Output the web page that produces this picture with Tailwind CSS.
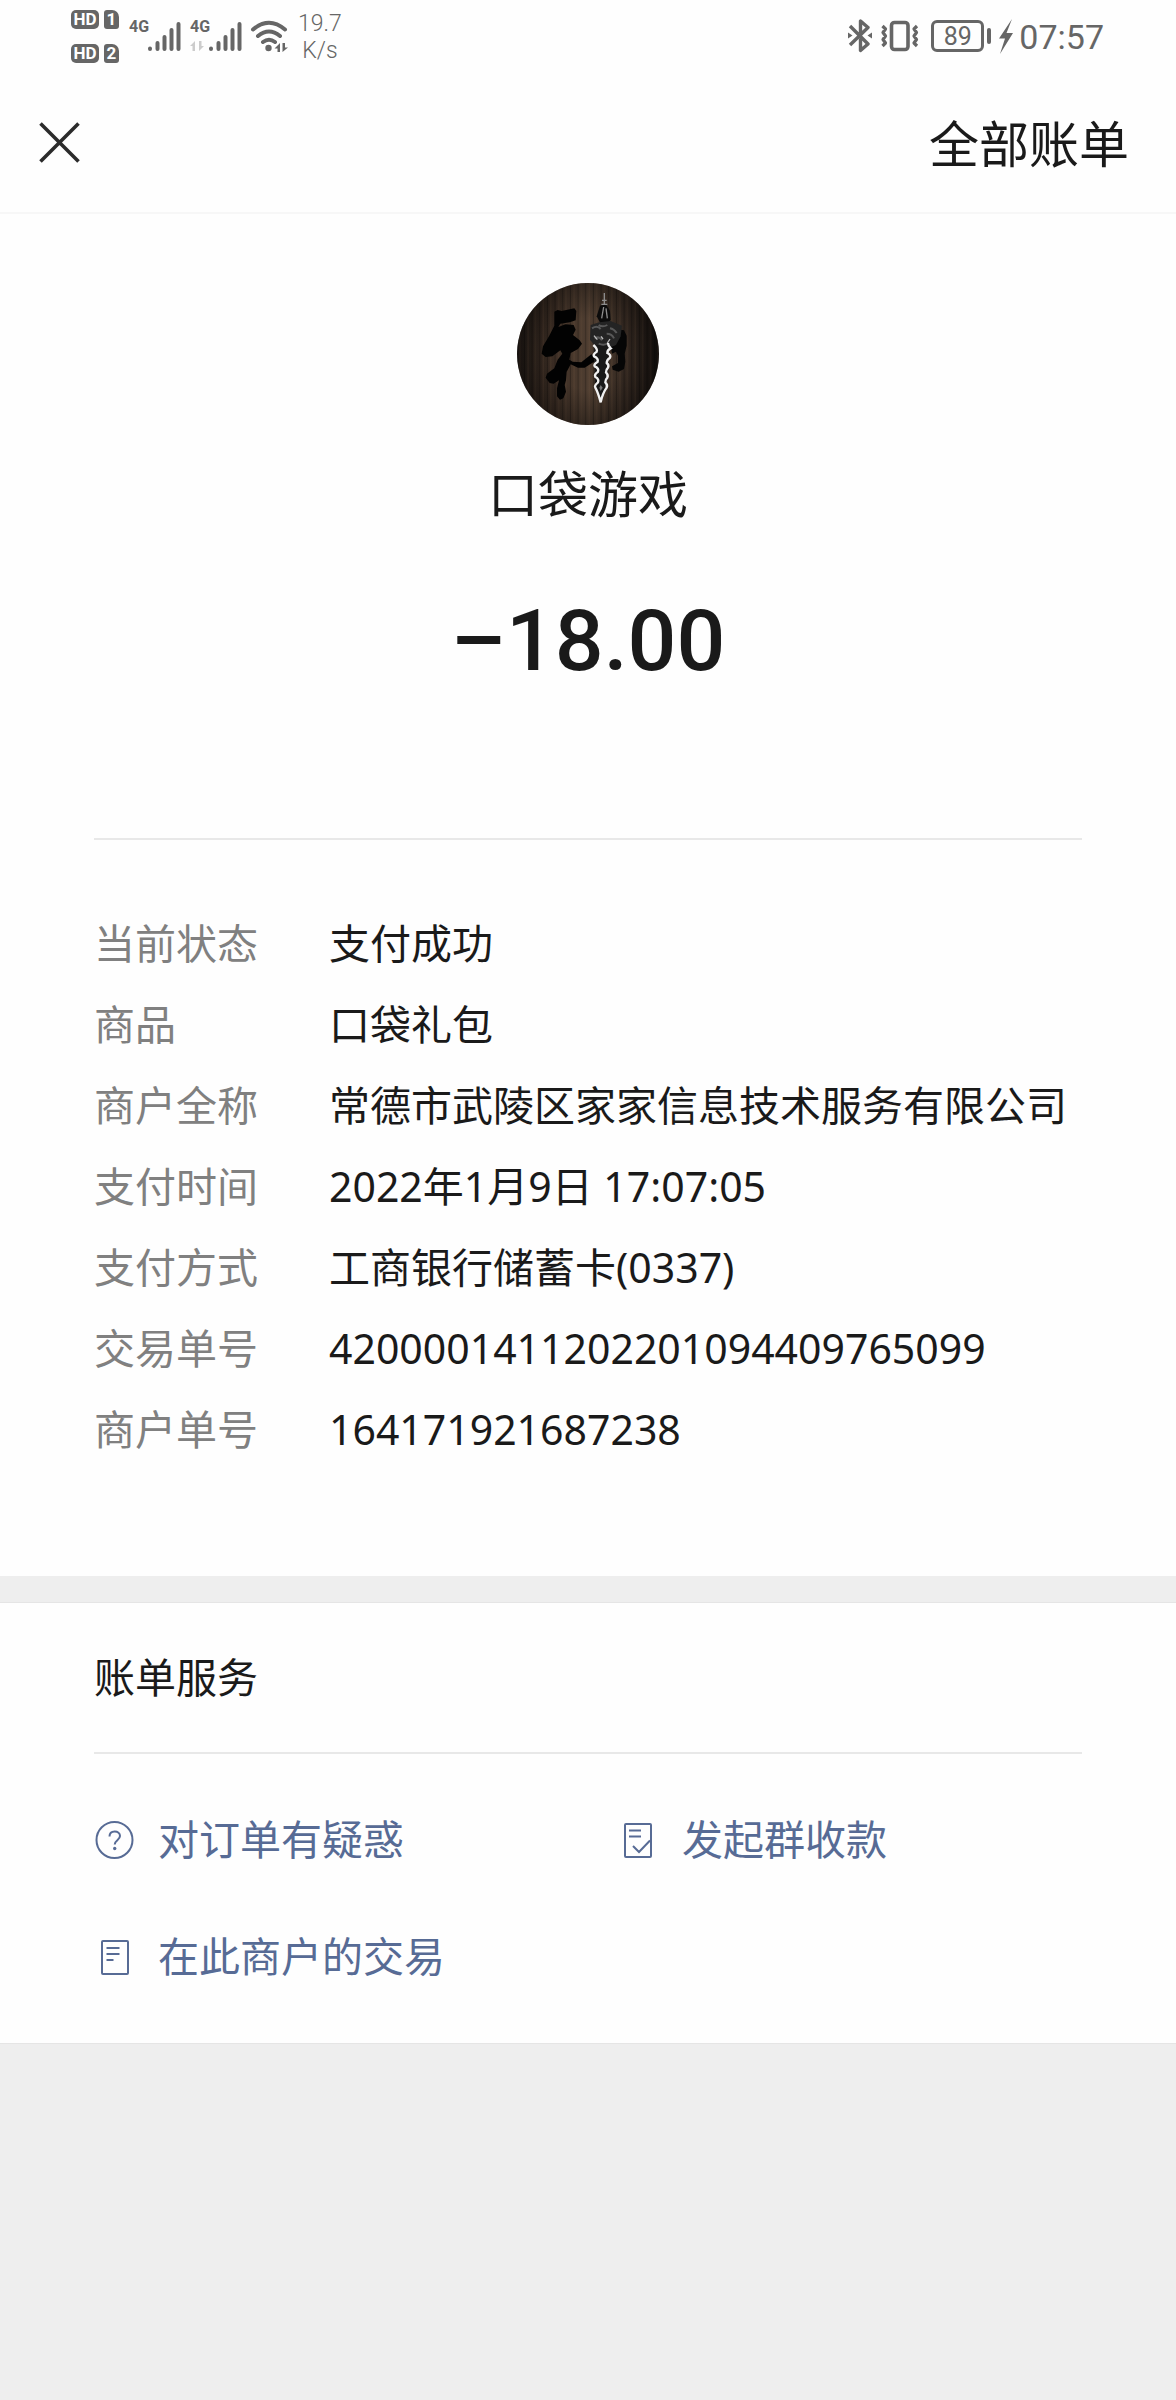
<!DOCTYPE html>
<html lang="zh-CN">
<head>
    <meta charset="UTF-8">
    <meta name="viewport" content="width=device-width, initial-scale=1.0">
    <title>账单详情</title>
    <script src="https://cdn.jsdelivr.net/npm/@tailwindcss/browser@4"></script>
</head>
<body class="min-h-screen bg-[#eeeeee] font-['Noto_Sans','Noto_Sans_CJK_SC',sans-serif] text-[#1a1a1a]">

<!-- 状态栏 -->
<div class="flex h-[72px] items-center justify-between bg-[#fefefe] pl-[71px] pr-[72px] font-['Roboto',sans-serif] text-[#666666]">
    <div class="flex items-center">
        <!-- HD 1 / HD 2 -->
        <div class="flex flex-col gap-[15px] text-[17px] leading-[19px] font-bold text-white">
            <div class="flex gap-[5px]">
                <span class="w-7 rounded-[5px] bg-[#666666] text-center">HD</span>
                <span class="w-[15px] rounded-[3px] rounded-tr-[7px] bg-[#666666] text-center">1</span>
            </div>
            <div class="flex gap-[5px]">
                <span class="w-7 rounded-[5px] bg-[#666666] text-center">HD</span>
                <span class="w-[15px] rounded-[3px] rounded-tr-[7px] bg-[#666666] text-center">2</span>
            </div>
        </div>
        <!-- 信号 卡1 -->
        <div class="ml-[10px] flex">
            <span class="h-8 w-[19px] text-[16px] leading-[14px] font-bold">4G</span>
            <svg class="h-8 w-[33px]" viewBox="0 0 33 32" stroke="currentColor" stroke-width="4" stroke-linecap="round"><path d="M2 28.500v.5M9.500 23v6M16.500 17v12M23.500 10v19M30.500 4v25"/></svg>
        </div>
        <!-- 信号 卡2 -->
        <div class="ml-[9px] flex">
            <div class="flex w-[19px] flex-col gap-[7px]">
                <span class="text-[16px] leading-[14px] font-bold">4G</span>
                <svg class="h-[10px] w-[14px] text-[#cccccc]" viewBox="0 0 14 10" fill="currentColor"><path d="M0 5 5 0v10H2.500V5zM14 5 9 10V0h2.500v5z"/></svg>
            </div>
            <svg class="h-8 w-[33px]" viewBox="0 0 33 32" stroke="currentColor" stroke-width="4" stroke-linecap="round"><path d="M2 28.500v.5M9.500 23v6M16.500 17v12M23.500 10v19M30.500 4v25"/></svg>
        </div>
        <!-- Wi-Fi -->
        <svg class="ml-2 h-8 w-[40px]" viewBox="0 0 40 32" fill="none" stroke="currentColor" stroke-width="4" stroke-linecap="round">
            <path d="M3 9.500Q19 -4 35 9.500M8 16Q19 7 30 16M13 22Q19 17.500 25 22"/>
            <circle cx="18.500" cy="28" r="3.200" fill="currentColor" stroke="none"/>
            <path d="M24.500 28.500 30 23v9h-2.500v-3.500zM38 27.500 32.500 32v-9H35v4.500z" fill="currentColor" stroke="none"/>
        </svg>
        <!-- 网速 -->
        <div class="ml-2 pt-0.5 text-center text-[23px] leading-[27px] font-light">19.7<br>K/s</div>
    </div>
    <div class="flex items-center">
        <!-- 蓝牙 -->
        <svg class="h-[34px] w-[24px]" viewBox="0 0 24 34" fill="none" stroke="currentColor" stroke-width="3.400" stroke-linejoin="round">
            <path d="M2 7 20 25l-7.500 6.500v-12M2 26 20 8.500 12.500 2v12"/>
            <path d="M0 13.500 4.500 16.500 0 19.500zM24 13.500 19.500 16.500 24 19.500z" fill="currentColor" stroke="none"/>
        </svg>
        <!-- 振动 -->
        <svg class="ml-[9px] h-[34px] w-[38px]" viewBox="0 0 38 34" fill="none" stroke="currentColor" stroke-linejoin="round">
            <rect x="10.500" y="3.500" width="16.500" height="27" rx="3" stroke-width="3.600"/>
            <path d="M1.500 7 4.500 10 2 13.500 4.500 17 2 20.500 4.500 24 1.500 27M36 7l-3 3 2.500 3.500L33 17l2.500 3.500L33 24l3 3" stroke-width="3.200"/>
        </svg>
        <!-- 电量 -->
        <div class="ml-3 flex h-8 w-[53px] items-center justify-center rounded-[6px] border-3 border-current text-[25px] leading-none">89</div>
        <div class="ml-[3px] h-4 w-1 rounded-[2px] bg-[#666666]"></div>
        <svg class="ml-[8px] h-[35px] w-[14px]" viewBox="0 0 14 35" fill="currentColor"><path d="M13 0 0 19.500h6L1 35 14 14H7.500z"/></svg>
        <span class="ml-[6px] pt-0.5 text-[34px] leading-none">07:57</span>
    </div>
</div>

<!-- 顶部导航 -->
<header class="flex h-[142px] items-center justify-between border-b-2 border-[#f7f7f7] bg-[#fefefe] px-[39px]">
    <button type="button" aria-label="关闭">
        <svg class="h-[41px] w-[41px]" viewBox="0 0 41 41" fill="none" stroke="#2b2b2b" stroke-width="3.600"><path d="M1.500 1.500l38 38M39.500 1.500l-38 38"/></svg>
    </button>
    <button type="button" class="pt-1 pr-2 text-[50px] leading-[60px]">全部账单</button>
</header>

<main>
    <!-- 账单信息 -->
    <section class="bg-[#fefefe] px-[94px] pt-[69px] pb-[106px]">
        <div class="flex flex-col items-center border-b-2 border-[#e8e8e8] pb-[147px]">
            <svg class="h-[142px] w-[142px] rounded-full" viewBox="51 40 426 426">
                <defs>
                    <linearGradient id="wood" x1="0" x2="1">
                        <stop offset="0" stop-color="#211a16"/>
                        <stop offset=".25" stop-color="#3a2c23"/>
                        <stop offset=".5" stop-color="#4f3e31"/>
                        <stop offset=".75" stop-color="#362a22"/>
                        <stop offset="1" stop-color="#171210"/>
                    </linearGradient>
                    <radialGradient id="shade">
                        <stop offset=".5" stop-color="#000" stop-opacity="0"/>
                        <stop offset="1" stop-color="#000" stop-opacity=".35"/>
                    </radialGradient>
                    <pattern id="grain" width="46" height="426" patternUnits="userSpaceOnUse">
                        <path d="M4 0v426M27 0v426" stroke="#000" stroke-opacity=".3" stroke-width="3"/>
                        <path d="M14 0v426M38 0v426" stroke="#8a6b50" stroke-opacity=".15" stroke-width="4"/>
                    </pattern>
                </defs>
                <path d="M51 40h426v426H51z" fill="url(#wood)"/>
                <path d="M51 40h426v426H51z" fill="url(#grain)"/>
                <path d="M51 40h426v426H51z" fill="url(#shade)"/>
                <!-- 书法字 -->
                <path d="M163 126l10-5 12 3 38-8 6 8-2 28-18 6-28 4-6 10 22-8 24 2 6 14-8 16 20 16 7 10-12 16-22 12-4 20 10 6 26 2 30-24 10 4-2 18-28 18-20 0-22-10-12 22-2 26-4 14 4 20-8 20-10 4-9-10 0-24 6-24-16 10-12-2-12-16 4-12 22-16 10-26 14-18-6-10-24 18-20 2-12-10 4-22 18-30 16-32z" fill="#020202"/>
                <path d="M344 178l28 4 8 16 0 30-6 24 2 24-4 22-16 8-18-6-2-10 18-10 0-22-6-12-12 6-6-30z" fill="#060606"/>
                <path d="M300 108l18-4 12 20 2 26-10 14-20-2-12-22z" fill="#0b0b0b"/>
                <!-- 剑 -->
                <path d="M272 166l26-8 34-4 34 14-4 32-14 26-20 8-40-2-18-22z" fill="#242424"/>
                <path d="M282 226h44l-2 100-22 70-18-56z" fill="#191919"/>
                <path d="M313 70v34M306 92h14M304 104h18M311 112l-6 34M318 116l4 30" fill="none" stroke="#8c8c8c" stroke-width="4"/>
                <path d="M276 176q16-10 26 2M330 176q12 2 20 14M284 206q14-8 22 6M320 192q16 0 22 14M296 166q12 8 26 0M296 222q14 6 26 0" fill="none" stroke="#585858" stroke-width="6"/>
                <path d="M282 198l10 12M303 200l6 8M330 208l-8 12" fill="none" stroke="#b8b8b8" stroke-width="4"/>
                <path d="M280 226q14 12 10 20-12 8-8 14 14 6 11 16-13 8-9 14 14 6 10 16-12 8-8 16 12 6 8 16-12 10-8 16 8 14 16 44 6-28 18-44 4-8-4-16 0-8 6-14 4-8-4-16 0-8 6-14 4-8-4-14 0-10 10-16 4-8-8-14 0-10 10-14-8-8-8-16" fill="none" stroke="#f0f0f0" stroke-width="7"/>
                <path d="M302 346l6 8-6 10-4-10z" fill="#777"/>
            </svg>
            <h1 class="mt-[39px] text-[50px] leading-[60px]">口袋游戏</h1>
            <p class="mt-[67px] font-['Roboto',sans-serif] text-[86px] leading-[100px] font-medium">–18.00</p>
        </div>

        <dl class="mt-[63px] grid grid-cols-[235px_1fr] text-[41px] leading-[81px]">
            <dt class="text-[#808080]">当前状态</dt>
            <dd>支付成功</dd>
            <dt class="text-[#808080]">商品</dt>
            <dd>口袋礼包</dd>
            <dt class="text-[#808080]">商户全称</dt>
            <dd>常德市武陵区家家信息技术服务有限公司</dd>
            <dt class="text-[#808080]">支付时间</dt>
            <dd>2022年1月9日 17:07:05</dd>
            <dt class="text-[#808080]">支付方式</dt>
            <dd>工商银行储蓄卡(0337)</dd>
            <dt class="text-[#808080]">交易单号</dt>
            <dd>4200001411202201094409765099</dd>
            <dt class="text-[#808080]">商户单号</dt>
            <dd>164171921687238</dd>
        </dl>
    </section>

    <!-- 账单服务 -->
    <section class="mt-[26px] border-y border-[#e5e5e5] bg-[#fefefe] px-[94px] pb-[57px]">
        <h2 class="border-b-2 border-[#e8e8e8] text-[41px] leading-[149px]">账单服务</h2>
        <div class="grid grid-cols-2 gap-x-15 gap-y-[57px] pt-[55px] text-[41px] leading-[60px] text-[#576b95]">
            <a href="#" class="flex items-center gap-6">
                <svg class="h-10 w-10 shrink-0" viewBox="0 0 40 40" fill="none" stroke="currentColor" stroke-width="2">
                    <circle cx="20.500" cy="21" r="18"/>
                    <path d="M15.500 17.500C15.500 14 18 12.500 20.700 12.500c3 0 5.300 1.800 5.300 4.600 0 4-5.300 4.300-5.300 8.400"/>
                    <circle cx="20.700" cy="29.500" r="1.700" fill="currentColor" stroke="none"/>
                </svg>
                对订单有疑惑
            </a>
            <a href="#" class="flex items-center gap-6">
                <svg class="h-10 w-10 shrink-0" viewBox="0 0 40 40" fill="none" stroke="currentColor" stroke-width="2">
                    <rect x="7" y="5" width="26" height="33" rx="1"/>
                    <path d="M11 11.500h12M11 17.500h12M15 27l6 6L32 21.500"/>
                </svg>
                发起群收款
            </a>
            <a href="#" class="flex items-center gap-6">
                <svg class="h-10 w-10 shrink-0" viewBox="0 0 40 40" fill="none" stroke="currentColor" stroke-width="2">
                    <rect x="8" y="5" width="26" height="33" rx="1"/>
                    <path d="M12.500 12h13M12.500 18h13M12.500 24h7"/>
                </svg>
                在此商户的交易
            </a>
        </div>
    </section>
</main>
</body>
</html>
